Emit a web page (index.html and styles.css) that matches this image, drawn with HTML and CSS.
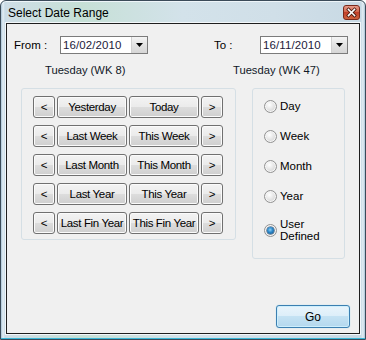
FILE: index.html
```html
<!DOCTYPE html>
<html>
<head>
<meta charset="utf-8">
<link rel="stylesheet" href="styles.css">
</head>
<body>
<div class="window">
  <div class="titlebar">
    <span class="title">Select Date Range</span>
    <span class="close">
      <svg width="17" height="15" viewBox="0 0 17 15">
        <defs>
          <linearGradient id="cg" x1="0" y1="0" x2="0" y2="1">
            <stop offset="0" stop-color="#e8a08f"/>
            <stop offset="0.45" stop-color="#d2654c"/>
            <stop offset="0.5" stop-color="#c2402a"/>
            <stop offset="1" stop-color="#d0653f"/>
          </linearGradient>
        </defs>
        <rect x="0.5" y="0.5" width="16" height="14" rx="2.5" fill="url(#cg)" stroke="#7a2a1c"/>
        <path d="M5.5 4.5 L11.5 10.5 M11.5 4.5 L5.5 10.5" stroke="#4a1a10" stroke-width="3.2" stroke-linecap="square"/>
        <path d="M5.5 4.5 L11.5 10.5 M11.5 4.5 L5.5 10.5" stroke="#ffffff" stroke-width="1.6" stroke-linecap="square"/>
      </svg>
    </span>
  </div>
  <div class="client">
    <div class="row-dates">
      <span class="lbl">From :</span>
      <div class="datebox">
        <span class="datetext">16/02/2010</span>
        <span class="dd"><svg width="7" height="4" viewBox="0 0 7 4"><path d="M0 0 H7 L3.5 4 Z" fill="#000"/></svg></span>
      </div>
      <span class="lbl lbl-to">To :</span>
      <div class="datebox">
        <span class="datetext">16/11/2010</span>
        <span class="dd"><svg width="7" height="4" viewBox="0 0 7 4"><path d="M0 0 H7 L3.5 4 Z" fill="#000"/></svg></span>
      </div>
    </div>
    <div class="row-days">
      <span class="day day-from">Tuesday (WK 8)</span>
      <span class="day day-to">Tuesday (WK 47)</span>
    </div>
    <div class="main">
      <div class="group group-buttons">
        <div class="btn-grid">
          <button class="btn">&lt;</button><button class="btn">Yesterday</button><button class="btn">Today</button><button class="btn">&gt;</button>
          <button class="btn">&lt;</button><button class="btn">Last Week</button><button class="btn">This Week</button><button class="btn">&gt;</button>
          <button class="btn">&lt;</button><button class="btn">Last Month</button><button class="btn">This Month</button><button class="btn">&gt;</button>
          <button class="btn">&lt;</button><button class="btn">Last Year</button><button class="btn">This Year</button><button class="btn">&gt;</button>
          <button class="btn">&lt;</button><button class="btn">Last Fin Year</button><button class="btn">This Fin Year</button><button class="btn">&gt;</button>
        </div>
      </div>
      <div class="group group-radios">
        <div class="radio-row"><span class="radio"></span><span class="rlabel">Day</span></div>
        <div class="radio-row"><span class="radio"></span><span class="rlabel">Week</span></div>
        <div class="radio-row"><span class="radio"></span><span class="rlabel">Month</span></div>
        <div class="radio-row"><span class="radio"></span><span class="rlabel">Year</span></div>
        <div class="radio-row radio-row-tall"><span class="radio checked"></span><span class="rlabel">User<br>Defined</span></div>
      </div>
    </div>
    <div class="footer">
      <button class="btn btn-go">Go</button>
    </div>
  </div>
</div>
</body>
</html>
```
FILE: styles.css
```css
html, body {
  margin: 0;
  padding: 0;
  background: #ffffff;
}

.window {
  box-sizing: border-box;
  width: 366px;
  height: 340px;
  border: 1px solid #3b4b59;
  border-radius: 6px 6px 0 0;
  padding: 0 5px 5px 5px;
  display: flex;
  flex-direction: column;
  background:
    linear-gradient(90deg, #a9c3d6 0px, #e4eef4 2px, #c7dae6 4px, rgba(255,255,255,0) 6px),
    linear-gradient(270deg, #a9c3d6 0px, #e4eef4 2px, #c7dae6 4px, rgba(255,255,255,0) 6px),
    linear-gradient(90deg, #cfdde7 0%, #c6e0d6 22%, #d3e2ea 50%, #d0dfe8 75%, #c8d9e4 100%);
  box-shadow: inset 0 -1px 0 #39b7d8, inset 0 1px 0 #eef5f9;
  font-family: "Liberation Sans", Arial, sans-serif;
}

.titlebar {
  height: 22px;
  display: flex;
  justify-content: space-between;
  align-items: flex-start;
}

.title {
  font-size: 12px;
  line-height: 22px;
  padding-left: 2px;
  padding-top: 1px;
  color: #000;
}

.close {
  margin-top: 4px;
  height: 15px;
  display: block;
}

.close svg {
  display: block;
}

.client {
  flex: 1;
  border: 1px solid #1e1e1e;
  box-shadow: 0 0 0 1px #f3f7fa;
  background: #f0f0f0;
  display: flex;
  flex-direction: column;
  padding-top: 12px;
  font-size: 11px;
  color: #000;
}

.row-dates {
  display: flex;
  align-items: center;
  height: 18px;
  padding-left: 7px;
}

.lbl {
  width: 46px;
  font-size: 11.5px;
}

.lbl-to {
  margin-left: 66px;
}

.datebox {
  box-sizing: border-box;
  width: 88px;
  height: 18px;
  border: 1px solid #7b7b7b;
  background: #ffffff;
  display: flex;
  align-items: center;
  justify-content: space-between;
}

.datetext {
  padding-left: 2px;
  font-size: 11.5px;
  color: #1d1a3a;
  letter-spacing: 0.1px;
}

.dd {
  box-sizing: border-box;
  width: 16px;
  height: 16px;
  background: linear-gradient(#f4f4f4, #e2e2e2 50%, #d6d6d6);
  border-left: 1px solid #d0d0d0;
  display: flex;
  align-items: center;
  justify-content: center;
}

.dd svg {
  display: block;
}

.row-days {
  display: flex;
  margin-top: 9px;
  height: 14px;
  line-height: 14px;
}

.day {
  font-size: 11.2px;
  color: #101828;
}

.day-from {
  margin-left: 38px;
  width: 188px;
}

.main {
  display: flex;
  align-items: flex-start;
  margin-top: 11px;
  padding-left: 14px;
}

.group {
  box-sizing: border-box;
  border: 1px solid #d5dfe5;
  border-radius: 3px;
}

.group-buttons {
  width: 215px;
  height: 152px;
  padding: 7px 0 0 11px;
}

.btn-grid {
  display: grid;
  grid-template-columns: 22px 70px 70px 22px;
  grid-auto-rows: 22px;
  column-gap: 2px;
  row-gap: 7px;
}

.btn {
  box-sizing: border-box;
  margin: 0;
  padding: 0;
  border: 1px solid #707070;
  border-radius: 3px;
  background: linear-gradient(#f3f3f3 0%, #ebebeb 49%, #dddddd 50%, #cfcfcf 100%);
  box-shadow: inset 0 0 0 1px #fbfbfb;
  font-family: "Liberation Sans", Arial, sans-serif;
  font-size: 11.5px;
  letter-spacing: -0.35px;
  color: #000;
  white-space: nowrap;
  overflow: hidden;
  line-height: 18px;
}

.group-radios {
  width: 93px;
  height: 171px;
  margin-left: 16px;
  padding: 9px 0 0 11px;
  display: flex;
  flex-direction: column;
  gap: 14px;
}

.radio-row {
  display: flex;
  align-items: center;
  height: 16px;
  font-size: 11.5px;
}

.radio-row-tall {
  height: 24px;
  line-height: 12px;
}

.radio {
  box-sizing: border-box;
  width: 13px;
  height: 13px;
  border-radius: 50%;
  border: 1px solid #929292;
  background: radial-gradient(circle at 40% 35%, #ffffff 0%, #e6e6e6 45%, #c9c9c9 100%);
  box-shadow: inset 0 0 0 1px #f6f6f6;
  margin-right: 3px;
  flex: none;
  display: flex;
  align-items: center;
  justify-content: center;
}

.radio.checked::after {
  content: "";
  width: 7px;
  height: 7px;
  border-radius: 50%;
  background: radial-gradient(circle at 45% 40%, #8fd0f6 0%, #2a86c8 45%, #0f4679 100%);
  box-shadow: 0 0 0 0.5px #1b3f63;
}

.footer {
  margin-top: auto;
  display: flex;
  justify-content: flex-end;
  padding: 0 9px 5px 0;
}

.btn-go {
  width: 74px;
  height: 23px;
  border-color: #3c7fb1;
  background: linear-gradient(#e9f4fb 0%, #dceef9 49%, #c4e2f3 50%, #b4d8ee 100%);
  box-shadow: inset 0 0 0 1px #cdeffd, 0 0 1px #7fd0f0;
  letter-spacing: 0;
  font-size: 12px;
}
```
